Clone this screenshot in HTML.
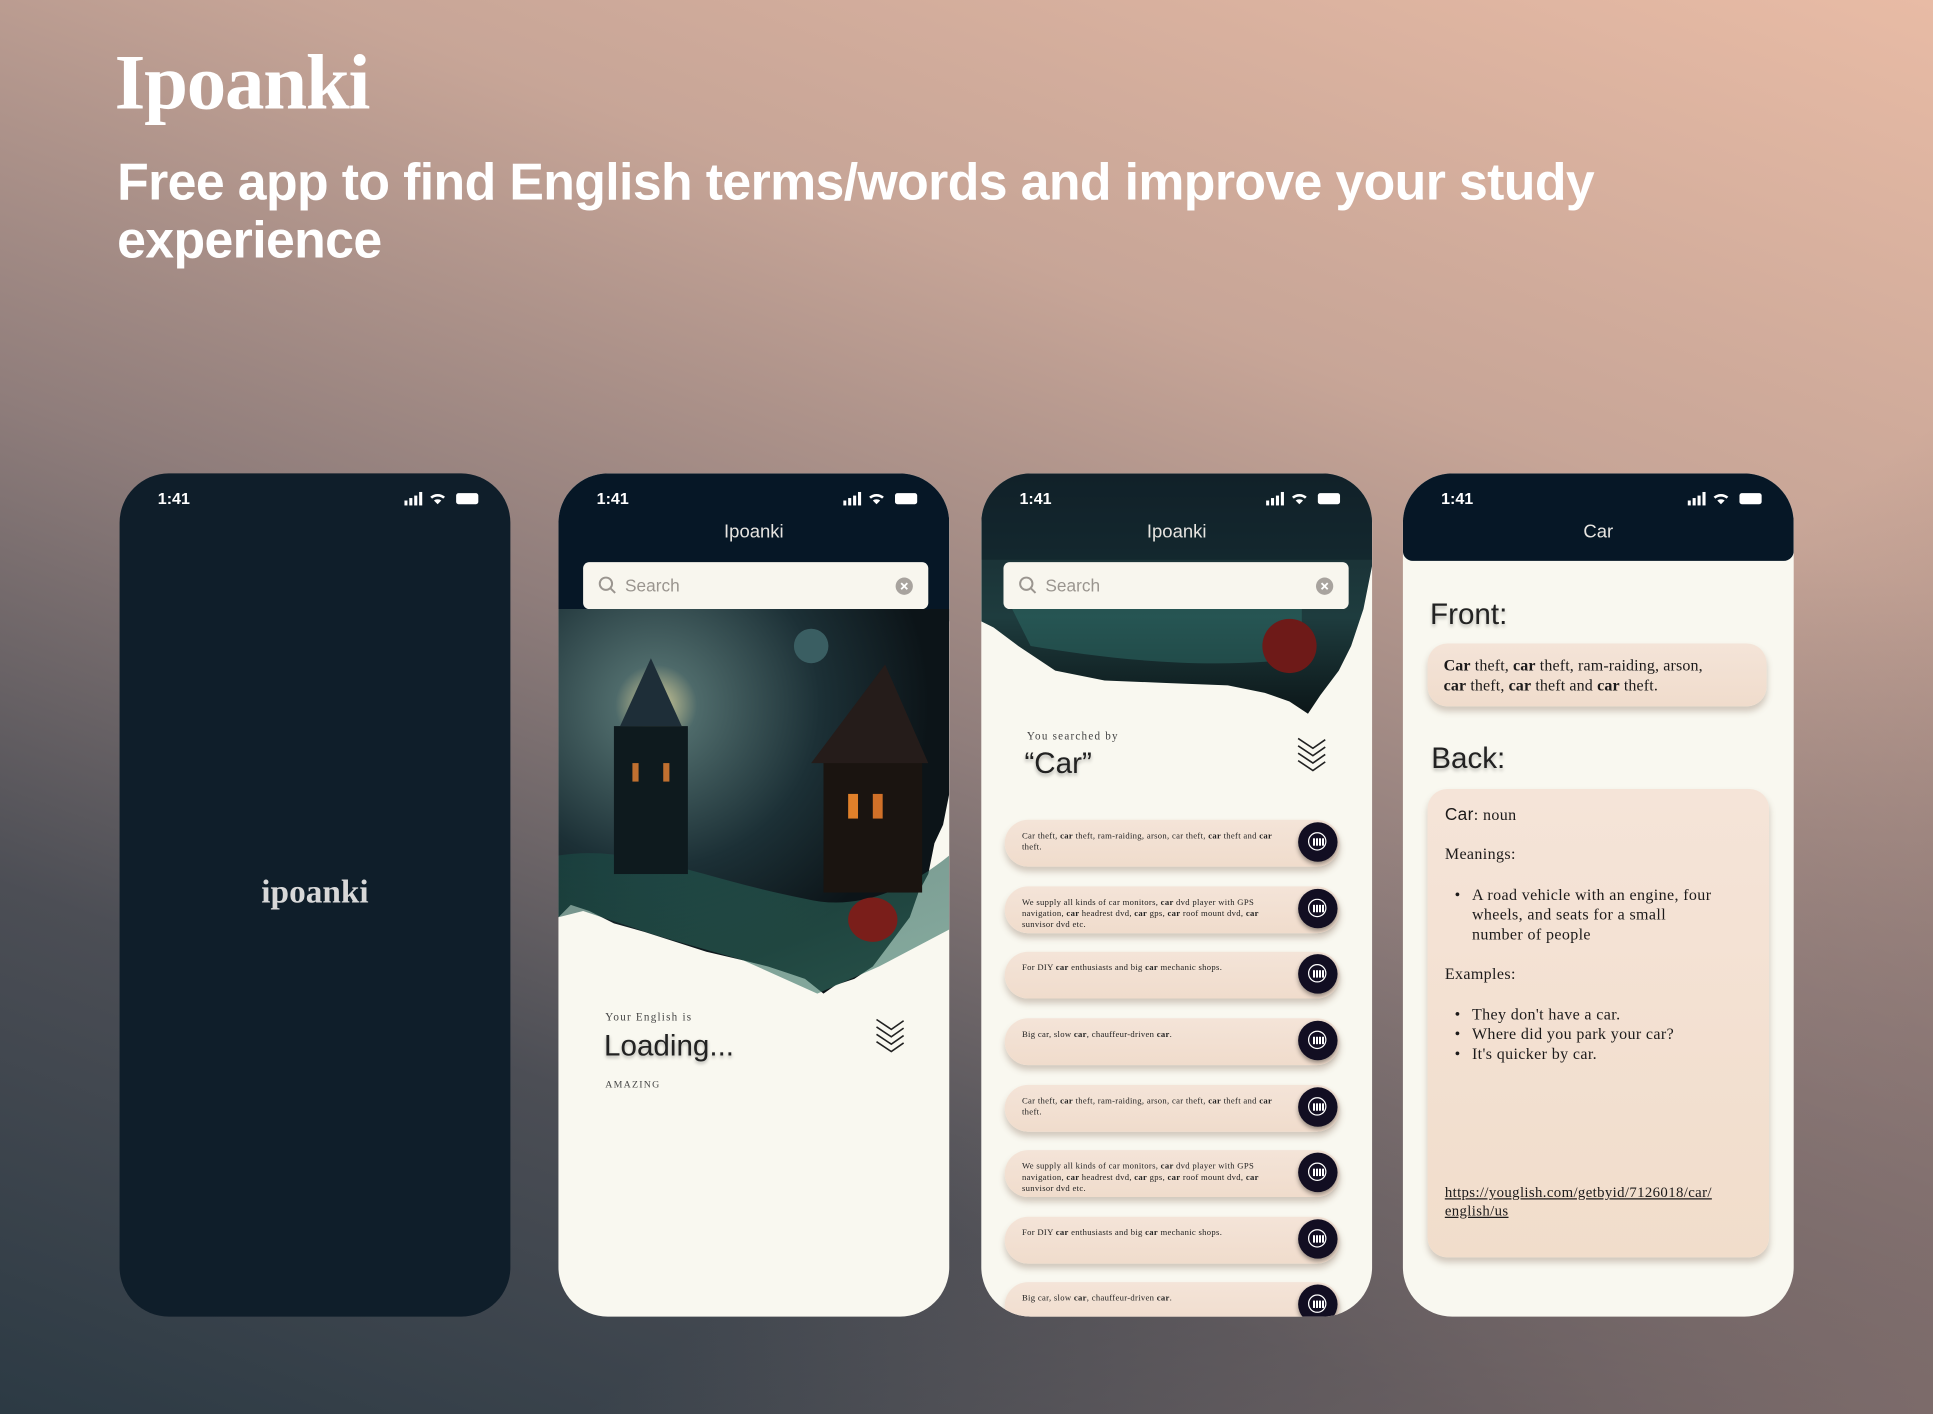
<!DOCTYPE html>
<html><head><meta charset="utf-8"><style>
html,body{margin:0;padding:0;width:1933px;height:1414px;overflow:hidden}
body{background:#6a6262}
#s{position:absolute;left:0;top:0;width:1568px;height:1147px;transform-origin:0 0;transform:scale(1.23278,1.23278);
background:linear-gradient(200deg,#e8bba5 0%,#c7a597 28%,#8f7d7b 52%,#4c4e55 75%,#2c3a44 100%);overflow:hidden;font-family:"Liberation Sans",sans-serif}
#s:after{content:"";position:absolute;inset:0;background:linear-gradient(to top left,rgba(130,110,108,0.8) 0%,rgba(130,110,108,0) 35%);pointer-events:none}
.abs{position:absolute}
h1{position:absolute;left:93px;top:30px;margin:0;color:#fff;font:bold 64px "Liberation Serif",serif;letter-spacing:-1px}
.sub{position:absolute;left:95px;top:124px;width:1300px;margin:0;color:#fff;font:bold 42px/47px "Liberation Sans",sans-serif;letter-spacing:-0.5px}
.ph{position:absolute;top:384px;width:317px;height:684px;border-radius:40px;overflow:hidden;background:#f9f8f0;z-index:1}
.hd{position:absolute;left:0;top:0;width:317px;background:#061726}
.sb{position:absolute;top:456px;left:20px;width:280px;height:38px;background:#f8f6ee;border-radius:5px}
.sb span{position:absolute;left:34px;top:11px;color:#9a958f;font:14px "Liberation Sans",sans-serif}
.card{position:absolute;left:19px;width:272px;height:38px;border-radius:19px;background:linear-gradient(#f4e4d8,#f0dccc);box-shadow:0 4px 5px rgba(120,90,70,0.3)}
.card p{margin:0;position:absolute;left:14px;top:9px;width:206px;font:7px/9px "Liberation Serif",serif;letter-spacing:0.25px;color:#222}
.btn{position:absolute;right:2px;top:2px;width:32px;height:32px;border-radius:50%;background:#120e22;box-shadow:0 2px 4px rgba(0,0,0,.4)}
.btn:after{content:"";position:absolute;left:8px;top:8px;width:13px;height:13px;border:1.5px solid #fff;border-radius:50%}
.btn:before{content:"";position:absolute;left:12px;top:13px;width:9px;height:6px;background:repeating-linear-gradient(90deg,#fff 0 1.5px,transparent 1.5px 2.5px)}
.ser{font-family:"Liberation Serif",serif;color:#1c1a1a}
</style></head><body><div id="s">
<h1>Ipoanki</h1>
<p class="sub">Free app to find English terms/words and improve your study<br>experience</p>

<div class="ph" style="left:97px;background:#0f1e2a">
 <div class="abs" style="left:31px;top:13px;color:#fff;font:600 13px 'Liberation Sans'">1:41</div>
 <svg class="abs" style="right:24px;top:15px" width="62" height="12"><g fill="#fff"><rect x="0" y="7" width="2.5" height="4"/><rect x="4" y="5" width="2.5" height="6"/><rect x="8" y="3" width="2.5" height="8"/><rect x="12" y="0" width="2.5" height="11"/><path d="M21 4a9 9 0 0 1 12 0l-1.5 1.5a7 7 0 0 0-9 0z M24 7a5 5 0 0 1 6 0l-3 3z"/><rect x="42" y="1" width="18" height="9" rx="2"/></g></svg>
 <div class="abs" style="left:0;top:324px;width:317px;text-align:center;color:#d8d8d8;font:bold 27px 'Liberation Serif',serif">ipoanki</div>
</div>

<div class="ph" style="left:453px">
 <div class="hd" style="height:120px"></div>
 <svg class="abs" style="left:0;top:110px" width="317" height="320" viewBox="0 0 317 320">
  <defs><radialGradient id="g1" cx="0.25" cy="0.25" r="0.7"><stop offset="0" stop-color="#d8d09a"/><stop offset="0.15" stop-color="#4e6a6a"/><stop offset="0.6" stop-color="#1c3036"/><stop offset="1" stop-color="#0c1418"/></radialGradient>
  <linearGradient id="gg" x1="0" y1="0" x2="1" y2="1"><stop offset="0" stop-color="#1a4a44"/><stop offset="1" stop-color="#3a7a6a"/></linearGradient></defs>
  <path d="M0 0H317V150L312 175 305 190 300 215 292 230 285 250 270 270 255 290 240 300 225 305 215 312 200 300 185 295 170 290 150 285 120 278 95 270 70 262 45 255 25 245 10 240 0 250Z" fill="url(#g1)"/>
  <path d="M0 200 C60 190 120 220 200 235 C240 245 280 230 317 200 V260 L260 290 210 312 150 285 80 265 20 245 0 250Z" fill="url(#gg)" opacity="0.6"/>
  <rect x="45" y="95" width="60" height="120" fill="#0e1a1e"/><path d="M50 95 L75 40 100 95Z" fill="#1e2e38"/>
  <rect x="215" y="120" width="80" height="110" fill="#1a1410"/><path d="M205 125 L265 45 300 125Z" fill="#251c1a"/>
  <rect x="235" y="150" width="8" height="20" fill="#e0802a"/><rect x="255" y="150" width="8" height="20" fill="#d07028"/>
  <rect x="60" y="125" width="5" height="15" fill="#c07030"/><rect x="85" y="125" width="5" height="15" fill="#c07030"/>
  <circle cx="205" cy="30" r="14" fill="#3a5e62"/>
  <ellipse cx="255" cy="252" rx="20" ry="18" fill="#7a1e1a"/>
 </svg>
 <div class="abs" style="left:31px;top:13px;color:#fff;font:600 13px 'Liberation Sans'">1:41</div>
 <svg class="abs" style="right:24px;top:15px" width="62" height="12"><g fill="#fff"><rect x="0" y="7" width="2.5" height="4"/><rect x="4" y="5" width="2.5" height="6"/><rect x="8" y="3" width="2.5" height="8"/><rect x="12" y="0" width="2.5" height="11"/><path d="M21 4a9 9 0 0 1 12 0l-1.5 1.5a7 7 0 0 0-9 0z M24 7a5 5 0 0 1 6 0l-3 3z"/><rect x="42" y="1" width="18" height="9" rx="2"/></g></svg>
 <div class="abs" style="top:39px;width:317px;text-align:center;color:#e6e4e0;font:15px 'Liberation Sans'">Ipoanki</div>
 <div class="sb" style="top:72px"><svg class="abs" style="left:12px;top:11px" width="16" height="16"><circle cx="6.5" cy="6.5" r="5" fill="none" stroke="#9a958f" stroke-width="1.6"/><path d="M10 10l4 4" stroke="#9a958f" stroke-width="1.6"/></svg><span>Search</span><svg class="abs" style="right:12px;top:12px" width="15" height="15"><circle cx="7.5" cy="7.5" r="7" fill="#a8a39e"/><path d="M5 5l5 5M10 5l-5 5" stroke="#fff" stroke-width="1.5"/></svg></div>
 <div class="abs ser" style="left:38px;top:436px;font-size:9px;letter-spacing:1px;color:#444">Your English is</div>
 <div class="abs" style="left:37px;top:451px;font:24px 'Liberation Sans';color:#222;text-shadow:0 2px 3px rgba(0,0,0,.3)">Loading...</div>
 <div class="abs ser" style="left:38px;top:491px;font-size:8px;letter-spacing:1px;color:#444">AMAZING</div>
 <svg class="abs" style="left:255px;top:440px" width="28" height="32"><g fill="none" stroke="#222" stroke-width="1.3"><path d="M3 3l12 8 10-7M3 9l12 8 10-7M3 15l12 8 10-7M3 21l12 8 10-7"/></g></svg>
</div>

<div class="ph" style="left:796px">
 <svg class="abs" style="left:0;top:0" width="317" height="200" viewBox="0 0 317 200">
  <defs><linearGradient id="g3" x1="0" y1="0" x2="0" y2="1"><stop offset="0" stop-color="#16262e"/><stop offset="0.6" stop-color="#1e3c3e"/><stop offset="1" stop-color="#0c1618"/></linearGradient></defs>
  <path d="M0 0H317V75L310 110 300 140 290 160 275 180 265 195 250 185 230 178 200 172 150 170 100 168 60 160 30 140 10 125 0 120Z" fill="url(#g3)"/>
  <path d="M20 100 C80 95 160 100 260 105 L260 150 C180 160 100 150 40 140Z" fill="#2e6e68" opacity="0.5"/>
  <ellipse cx="250" cy="140" rx="22" ry="22" fill="#6e1a18"/>
  <rect x="0" y="0" width="317" height="70" fill="#0a1a24" opacity="0.45"/>
 </svg>
 <div class="abs" style="left:31px;top:13px;color:#fff;font:600 13px 'Liberation Sans'">1:41</div>
 <svg class="abs" style="right:24px;top:15px" width="62" height="12"><g fill="#fff"><rect x="0" y="7" width="2.5" height="4"/><rect x="4" y="5" width="2.5" height="6"/><rect x="8" y="3" width="2.5" height="8"/><rect x="12" y="0" width="2.5" height="11"/><path d="M21 4a9 9 0 0 1 12 0l-1.5 1.5a7 7 0 0 0-9 0z M24 7a5 5 0 0 1 6 0l-3 3z"/><rect x="42" y="1" width="18" height="9" rx="2"/></g></svg>
 <div class="abs" style="top:39px;width:317px;text-align:center;color:#e6e4e0;font:15px 'Liberation Sans'">Ipoanki</div>
 <div class="sb" style="top:72px;left:18px"><svg class="abs" style="left:12px;top:11px" width="16" height="16"><circle cx="6.5" cy="6.5" r="5" fill="none" stroke="#9a958f" stroke-width="1.6"/><path d="M10 10l4 4" stroke="#9a958f" stroke-width="1.6"/></svg><span>Search</span><svg class="abs" style="right:12px;top:12px" width="15" height="15"><circle cx="7.5" cy="7.5" r="7" fill="#a8a39e"/><path d="M5 5l5 5M10 5l-5 5" stroke="#fff" stroke-width="1.5"/></svg></div>
 <div class="abs ser" style="left:37px;top:208px;font-size:9px;letter-spacing:1px;color:#444">You searched by</div>
 <div class="abs" style="left:35px;top:222px;font:24px 'Liberation Sans';color:#222;text-shadow:0 2px 3px rgba(0,0,0,.3)">“Car”</div>
 <svg class="abs" style="left:254px;top:212px" width="28" height="32"><g fill="none" stroke="#222" stroke-width="1.3"><path d="M3 3l12 8 10-7M3 9l12 8 10-7M3 15l12 8 10-7M3 21l12 8 10-7"/></g></svg>
 <div class="card" style="top:281px"><p>Car theft, <b>car</b> theft, ram-raiding, arson, car theft, <b>car</b> theft and <b>car</b> theft.</p><div class="btn"></div></div>
 <div class="card" style="top:335px"><p>We supply all kinds of car monitors, <b>car</b> dvd player with GPS navigation, <b>car</b> headrest dvd, <b>car</b> gps, <b>car</b> roof mount dvd, <b>car</b> sunvisor dvd etc.</p><div class="btn"></div></div>
 <div class="card" style="top:388px"><p>For DIY <b>car</b> enthusiasts and big <b>car</b> mechanic shops.</p><div class="btn"></div></div>
 <div class="card" style="top:442px"><p>Big car, slow <b>car</b>, chauffeur-driven <b>car</b>.</p><div class="btn"></div></div>
 <div class="card" style="top:496px"><p>Car theft, <b>car</b> theft, ram-raiding, arson, car theft, <b>car</b> theft and <b>car</b> theft.</p><div class="btn"></div></div>
 <div class="card" style="top:549px"><p>We supply all kinds of car monitors, <b>car</b> dvd player with GPS navigation, <b>car</b> headrest dvd, <b>car</b> gps, <b>car</b> roof mount dvd, <b>car</b> sunvisor dvd etc.</p><div class="btn"></div></div>
 <div class="card" style="top:603px"><p>For DIY <b>car</b> enthusiasts and big <b>car</b> mechanic shops.</p><div class="btn"></div></div>
 <div class="card" style="top:656px"><p>Big car, slow <b>car</b>, chauffeur-driven <b>car</b>.</p><div class="btn"></div></div>
</div>

<div class="ph" style="left:1138px">
 <div class="hd" style="height:71px;border-radius:0 0 8px 8px"></div>
 <div class="abs" style="left:31px;top:13px;color:#fff;font:600 13px 'Liberation Sans'">1:41</div>
 <svg class="abs" style="right:24px;top:15px" width="62" height="12"><g fill="#fff"><rect x="0" y="7" width="2.5" height="4"/><rect x="4" y="5" width="2.5" height="6"/><rect x="8" y="3" width="2.5" height="8"/><rect x="12" y="0" width="2.5" height="11"/><path d="M21 4a9 9 0 0 1 12 0l-1.5 1.5a7 7 0 0 0-9 0z M24 7a5 5 0 0 1 6 0l-3 3z"/><rect x="42" y="1" width="18" height="9" rx="2"/></g></svg>
 <div class="abs" style="top:39px;width:317px;text-align:center;color:#e6e4e0;font:15px 'Liberation Sans'">Car</div>
 <div class="abs" style="left:22px;top:101px;font:24px 'Liberation Sans';color:#222;text-shadow:0 2px 3px rgba(0,0,0,.25)">Front:</div>
 <div class="abs" style="left:20px;top:138px;width:275px;height:51px;border-radius:16px;background:linear-gradient(#f4e4d8,#f0dccc);box-shadow:0 4px 5px rgba(120,90,70,0.3)">
  <div class="ser" style="position:absolute;left:13px;top:10px;font-size:13px;line-height:16px;letter-spacing:0.1px">
  <b>Car</b> theft, <b>car</b> theft, ram-raiding, arson,<br><b>car</b> theft, <b>car</b> theft and <b>car</b> theft.</div></div>
 <div class="abs" style="left:23px;top:218px;font:24px 'Liberation Sans';color:#222;text-shadow:0 2px 3px rgba(0,0,0,.25)">Back:</div>
 <div class="abs ser" style="left:20px;top:256px;width:277px;height:380px;border-radius:16px;background:linear-gradient(#f5e4d8,#f1ddcb);box-shadow:0 4px 5px rgba(120,90,70,0.3);font-size:13px;line-height:16px;letter-spacing:0.3px">
  <div style="position:absolute;left:14px;top:12px"><span style="font-family:'Liberation Sans';font-size:14px">Car</span>: noun</div>
  <div style="position:absolute;left:14px;top:45px">Meanings:</div>
  <div style="position:absolute;left:22px;top:78px">•</div>
  <div style="position:absolute;left:36px;top:78px">A road vehicle with an engine, four<br>wheels, and seats for a small<br>number of people</div>
  <div style="position:absolute;left:14px;top:142px">Examples:</div>
  <div style="position:absolute;left:22px;top:175px">•<br>•<br>•</div>
  <div style="position:absolute;left:36px;top:175px">They don't have a car.<br>Where did you park your car?<br>It's quicker by car.</div>
  <div style="position:absolute;left:14px;top:320px;text-decoration:underline;font-size:12px;line-height:15px">https://youglish.com/getbyid/7126018/car/<br>english/us</div>
 </div>
</div>
</div></body></html>
